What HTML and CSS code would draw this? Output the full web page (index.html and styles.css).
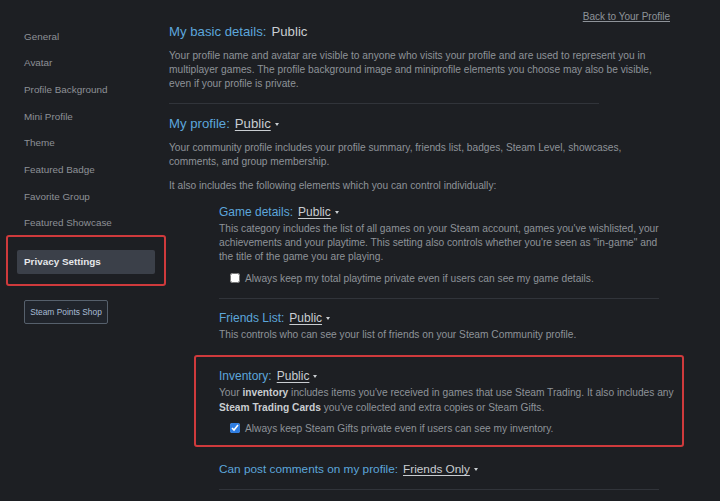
FILE: index.html
```html
<!DOCTYPE html>
<html lang="en">

<head>
    <meta charset="UTF-8">
    <meta name="viewport" content="width=device-width, initial-scale=1.0">
    <title>Privacy Settings</title>
    <link rel="stylesheet" href="styles.css">
</head>

<body>
    <div class="page">
        <aside class="sidebar">
            <a class="nav-item" href="#">General</a>
            <a class="nav-item" href="#">Avatar</a>
            <a class="nav-item" href="#">Profile Background</a>
            <a class="nav-item" href="#">Mini Profile</a>
            <a class="nav-item" href="#">Theme</a>
            <a class="nav-item" href="#">Featured Badge</a>
            <a class="nav-item" href="#">Favorite Group</a>
            <a class="nav-item" href="#">Featured Showcase</a>
            <div class="marked">
                <a class="nav-item active" href="#">Privacy Settings</a>
            </div>
            <a class="points-btn" href="#">Steam Points Shop</a>
        </aside>

        <main class="content">
            <div class="back-row">
                <a class="back-link" href="#">Back to Your Profile</a>
            </div>

            <h2 class="title title-big title-first"><span class="label">My basic details:</span> <span class="value">Public</span></h2>
            <p class="text text-first">Your profile name and avatar are visible to anyone who visits your profile and are used to represent you in multiplayer games. The profile background image and miniprofile elements you choose may also be visible, even if your profile is private.</p>

            <hr class="line">

            <h2 class="title title-big title-profile"><span class="label">My profile:</span> <a class="value dropdown" href="#">Public</a><span class="caret"></span></h2>
            <p class="text text-first">Your community profile includes your profile summary, friends list, badges, Steam Level, showcases, comments, and group membership.</p>
            <p class="text text-also">It also includes the following elements which you can control individually:</p>

            <div class="sub">
                <h3 class="title title-game"><span class="label">Game details:</span> <a class="value dropdown" href="#">Public</a><span class="caret"></span></h3>
                <p class="text text-sub">This category includes the list of all games on your Steam account, games you've wishlisted, your achievements and your playtime. This setting also controls whether you're seen as "in-game" and the title of the game you are playing.</p>
                <label class="check-row"><input type="checkbox" class="box box-white"> Always keep my total playtime private even if users can see my game details.</label>

                <hr class="line line-sub">

                <h3 class="title title-friends"><span class="label">Friends List:</span> <a class="value dropdown" href="#">Public</a><span class="caret"></span></h3>
                <p class="text text-sub">This controls who can see your list of friends on your Steam Community profile.</p>
            </div>

            <div class="marked-box">
                <h3 class="title title-inv"><span class="label">Inventory:</span> <a class="value dropdown" href="#">Public</a><span class="caret"></span></h3>
                <p class="text text-sub text-inv">Your <b>inventory</b> includes items you've received in games that use Steam Trading. It also includes any <b>Steam Trading Cards</b> you've collected and extra copies or Steam Gifts.</p>
                <label class="check-row check-inv"><input type="checkbox" class="box box-blue" checked> Always keep Steam Gifts private even if users can see my inventory.</label>
            </div>

            <div class="sub">
                <h3 class="title title-comments"><span class="label">Can post comments on my profile:</span> <a class="value dropdown" href="#">Friends Only</a><span class="caret"></span></h3>
                <hr class="line line-last">
            </div>
        </main>
    </div>
</body>

</html>
```

FILE: styles.css
```css
body {
    margin: 0;
    padding: 0;
    background-color: #1d1f23;
    font-family: "Liberation Sans", Arial, sans-serif;
    color: #8e9399;
    height: 501px;
    overflow: hidden;
}

.page {
    display: flex;
}

/* linke Navigation */
.sidebar {
    width: 169px;
    flex-shrink: 0;
    padding-top: 23.6px;
    display: flex;
    flex-direction: column;
}

.nav-item {
    display: block;
    height: 26.7px;
    line-height: 26.7px;
    padding-left: 24px;
    font-size: 9.9px;
    color: #8d9197;
    text-decoration: none;
}

.marked {
    margin: -2px 0 0 6px;
    width: 160px;
    box-sizing: border-box;
    border: 2px solid #cf3a3c;
    border-radius: 3px;
    padding: 13px 9px 10px 9px;
}

.nav-item.active {
    height: 24px;
    line-height: 24px;
    padding-left: 7px;
    background-color: #3b4049;
    border-radius: 2px;
    color: #e6e8ea;
    font-weight: bold;
}

.points-btn {
    margin: 14px 0 0 24px;
    width: 84px;
    height: 24px;
    box-sizing: border-box;
    display: flex;
    align-items: center;
    justify-content: center;
    border: 1px solid #56606c;
    border-radius: 2px;
    background-color: #20242b;
    color: #a8bdd6;
    font-size: 8.4px;
    white-space: nowrap;
    text-decoration: none;
}

/* Inhalt */
.content {
    width: 501px;
    padding-top: 11px;
}

.back-row {
    display: flex;
    justify-content: flex-end;
    height: 12px;
}

.back-link {
    font-size: 10px;
    line-height: 12px;
    color: #8e9399;
}

.title {
    margin: 0;
    font-size: 12px;
    line-height: 16px;
    font-weight: normal;
    display: flex;
    align-items: center;
}

.title-big {
    font-size: 13.2px;
}

.title .label {
    color: #5ca6db;
    margin-right: 5px;
}

.title .value {
    color: #c9cdd1;
}

.dropdown {
    text-decoration: underline;
    text-underline-offset: 2px;
}

.caret {
    width: 0;
    height: 0;
    margin-left: 4px;
    border-left: 2.5px solid transparent;
    border-right: 2.5px solid transparent;
    border-top: 3px solid #c9cdd1;
}

.title-first { margin-top: 1px; }
.title-profile { margin-top: 12px; }
.title-game { margin-top: 11px; }
.title-friends { margin-top: 11px; }
.title-comments { margin-top: 14px; font-size: 11.8px; }

.text {
    margin: 0;
    font-size: 10.2px;
    line-height: 14px;
    max-width: 487px;
}

.text-first { margin-top: 9px; }
.text-also { margin-top: 10px; }
.text-sub { margin-top: 2px; max-width: 452px; }
.text-inv { margin-top: 1px; line-height: 15px; max-width: 462px; }

.text b {
    color: #c9cdd1;
}

.sub {
    margin-left: 50px;
}

.check-row {
    display: flex;
    align-items: center;
    margin-top: 7px;
    padding-left: 11px;
    height: 14px;
    font-size: 10.2px;
    white-space: nowrap;
}

.box {
    width: 10px;
    height: 10px;
    margin: 0 5px 0 0;
}

.box-blue {
    accent-color: #2f7de1;
}

.check-inv {
    margin-top: 6px;
}

.line {
    border: none;
    border-top: 1px solid #31343a;
    margin: 12px 0 0 0;
    width: 430px;
}

.line-sub {
    margin-top: 13px;
    width: 440px;
}

.line-last {
    margin-top: 12px;
    width: 440px;
}

/* rot markierter Bereich */
.marked-box {
    margin: 13px 0 0 25px;
    width: 490px;
    box-sizing: border-box;
    border: 2px solid #cf3a3c;
    border-radius: 3px;
    padding: 11px 0 10px 23px;
}
```
